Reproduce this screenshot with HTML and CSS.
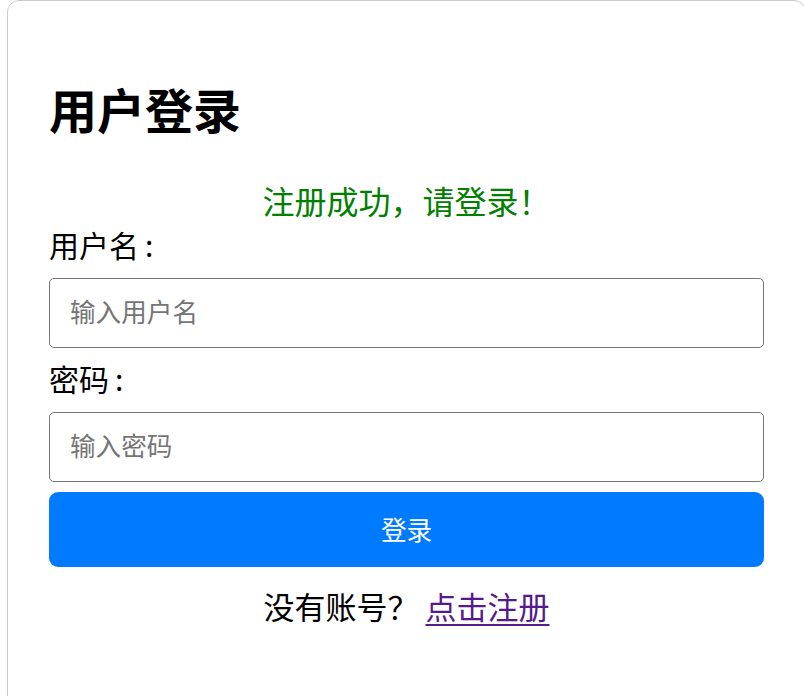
FILE: index.html
```html
<!DOCTYPE html>
<html lang="zh-CN">
<head>
<meta charset="utf-8">
<title>用户登录</title>
<link rel="stylesheet" href="styles.css">
</head>
<body>
<div class="card">
  <h1 class="title">用户登录</h1>
  <p class="message">注册成功，请登录！</p>
  <form class="form">
    <label class="label" for="username">用户名<span class="colon">:</span></label>
    <input class="input" id="username" type="text" placeholder="输入用户名">
    <label class="label label-second" for="password">密码<span class="colon">:</span></label>
    <input class="input" id="password" type="password" placeholder="输入密码">
    <button class="button" type="button">登录</button>
  </form>
  <p class="footer">没有账号？ <a class="link" href="#">点击注册</a></p>
</div>
</body>
</html>
```
FILE: styles.css
```css
html, body {
  margin: 0;
  padding: 0;
  overflow: hidden;
  background: #fff;
}
body {
  font-family: "Noto Sans CJK SC", "Noto Sans", sans-serif;
  color: #000;
}
.card {
  margin-left: 7px;
  width: 715px;
  min-height: 800px;
  padding: 35px 41px 0;
  border: 1.5px solid #cccccc;
  border-radius: 12px;
}
.title {
  margin: 48px 0 0;
  font-size: 48px;
  line-height: 48px;
  font-weight: 700;
}
.message {
  margin: 48px 0 0;
  font-size: 32px;
  line-height: 40px;
  color: #008000;
  text-align: center;
}
.form {
  display: flex;
  flex-direction: column;
  margin: 0;
}
.label {
  display: block;
  margin: 9px 0 19px;
  font-size: 30px;
  line-height: 30px;
}
.colon {
  margin-left: 6px;
}
.label-second {
  margin-top: 15px;
}
.input {
  box-sizing: border-box;
  height: 70px;
  margin: 0;
  padding: 0 20px 5px;
  border: 1.5px solid #767676;
  border-radius: 5px;
  font-family: inherit;
  font-size: 25.6px;
  color: #000;
  background: #fff;
}
.input::placeholder {
  color: #757575;
}
.button {
  height: 75px;
  margin-top: 10px;
  padding: 0 0 3px;
  border: none;
  border-radius: 9px;
  background: #007bff;
  color: #fff;
  font-family: inherit;
  font-size: 25.6px;
}
.footer {
  margin: 24px 0 0;
  font-size: 31px;
  line-height: 30px;
  text-align: center;
}
.link {
  color: #551a8b;
  text-decoration-thickness: 2px;
  text-underline-offset: 5px;
}
```
